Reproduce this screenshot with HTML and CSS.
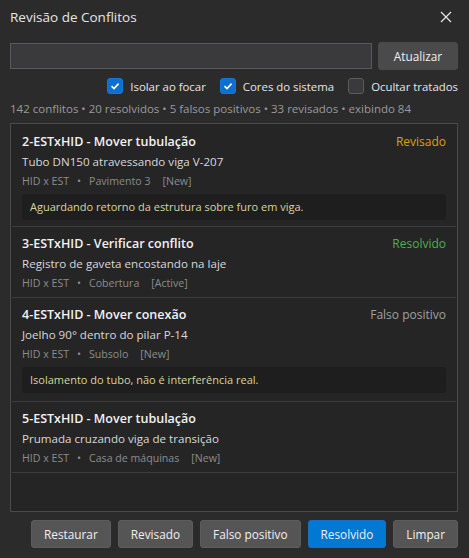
FILE: index.html
```html
<!DOCTYPE html>
<html lang="pt-BR">
<head>
    <meta charset="UTF-8">
    <meta name="viewport" content="width=device-width, initial-scale=1.0">
    <title>Revisão de Conflitos</title>
    <link rel="stylesheet" href="styles.css">
</head>
<body>
    <div class="window">
        <div class="header">
            <span class="title">Revisão de Conflitos</span>
            <span class="close">
                <svg width="12" height="12" viewBox="0 0 12 12"><path d="M1 1L11 11M11 1L1 11" stroke="#e6e6e6" stroke-width="1.2"/></svg>
            </span>
        </div>
        <div class="search-row">
            <input class="search" type="text">
            <button class="btn">Atualizar</button>
        </div>
        <div class="options">
            <label class="opt"><span class="box checked"><svg width="10" height="10" viewBox="0 0 10 10"><path d="M1.5 5.2L4 7.6L8.6 2.6" fill="none" stroke="#fff" stroke-width="1.6"/></svg></span>Isolar ao focar</label>
            <label class="opt"><span class="box checked"><svg width="10" height="10" viewBox="0 0 10 10"><path d="M1.5 5.2L4 7.6L8.6 2.6" fill="none" stroke="#fff" stroke-width="1.6"/></svg></span>Cores do sistema</label>
            <label class="opt"><span class="box"></span>Ocultar tratados</label>
        </div>
        <div class="stats">142 conflitos • 20 resolvidos • 5 falsos positivos • 33 revisados • exibindo 84</div>
        <ul class="list">
            <li class="item">
                <div class="item-head">
                    <span class="item-title">2-ESTxHID - Mover tubulação</span>
                    <span class="status revisado">Revisado</span>
                </div>
                <div class="item-desc">Tubo DN150 atravessando viga V-207</div>
                <div class="item-meta"><span>HID x EST</span><span>•</span><span>Pavimento 3</span><span>[New]</span></div>
                <div class="note">Aguardando retorno da estrutura sobre furo em viga.</div>
            </li>
            <li class="item">
                <div class="item-head">
                    <span class="item-title">3-ESTxHID - Verificar conflito</span>
                    <span class="status resolvido">Resolvido</span>
                </div>
                <div class="item-desc">Registro de gaveta encostando na laje</div>
                <div class="item-meta"><span>HID x EST</span><span>•</span><span>Cobertura</span><span>[Active]</span></div>
            </li>
            <li class="item">
                <div class="item-head">
                    <span class="item-title">4-ESTxHID - Mover conexão</span>
                    <span class="status falso">Falso positivo</span>
                </div>
                <div class="item-desc">Joelho 90° dentro do pilar P-14</div>
                <div class="item-meta"><span>HID x EST</span><span>•</span><span>Subsolo</span><span>[New]</span></div>
                <div class="note">Isolamento do tubo, não é interferência real.</div>
            </li>
            <li class="item">
                <div class="item-head">
                    <span class="item-title">5-ESTxHID - Mover tubulação</span>
                </div>
                <div class="item-desc">Prumada cruzando viga de transição</div>
                <div class="item-meta"><span>HID x EST</span><span>•</span><span>Casa de máquinas</span><span>[New]</span></div>
            </li>
        </ul>
        <div class="actions">
            <button class="btn">Restaurar</button>
            <button class="btn">Revisado</button>
            <button class="btn">Falso positivo</button>
            <button class="btn primary">Resolvido</button>
            <button class="btn">Limpar</button>
        </div>
    </div>
</body>
</html>
```

FILE: styles.css
```css
body {
    margin: 0;
    padding: 0;
    background-color: #2b2b2c;
    font-family: "Open Sans", "Noto Sans", sans-serif;
    color: #e6e6e6;
    height: 100vh;
    overflow: hidden;
}
.window {
    display: flex;
    flex-direction: column;
    height: 558px;
    padding: 0 11px 0 10px;
    box-sizing: border-box;
}
.header {
    display: flex;
    justify-content: space-between;
    align-items: center;
    height: 34px;
}
.title {
    font-size: 13.5px;
    color: #e6e6e6;
}
.close {
    display: flex;
    margin-right: 6px;
}
.search-row {
    display: flex;
    align-items: center;
    gap: 6px;
    margin-top: 8px;
}
.search {
    flex-grow: 1;
    height: 26px;
    box-sizing: border-box;
    background: #3a3a3d;
    border: 1px solid #595959;
    color: #e6e6e6;
    outline: none;
}
.btn {
    font-family: inherit;
    font-size: 11.8px;
    color: #f0f0f0;
    background: #555555;
    border: 1px solid #5a5a5a;
    border-radius: 3px;
    height: 28px;
    padding: 0 12px;
    white-space: nowrap;
    cursor: pointer;
}
.search-row .btn {
    width: 80px;
    background: #4a4a4a;
    border-color: #4a4a4a;
}
.options {
    display: flex;
    justify-content: flex-end;
    align-items: center;
    gap: 14px;
    margin-top: 8px;
    font-size: 11.4px;
}
.opt {
    display: flex;
    align-items: center;
    gap: 7px;
}
.box {
    width: 14px;
    height: 14px;
    border-radius: 3px;
    background: #3a3a3d;
    border: 1px solid #5c5c5c;
    display: flex;
    align-items: center;
    justify-content: center;
}
.box.checked {
    background: #0f6fd0;
    border-color: #1777d8;
}
.stats {
    font-size: 11.5px;
    color: #9a9a9a;
    margin-top: 7px;
    line-height: 16px;
}
.list {
    list-style: none;
    margin: 6px 0 0 0;
    padding: 0 1px;
    height: 389px;
    box-sizing: border-box;
    border: 1px solid #4a4a4a;
    background: #252526;
}
.item {
    padding: 8px 10px 5px;
    border-bottom: 1px solid #3c3c3c;
}
.item:first-child {
    padding-top: 9px;
}
.item:first-child .note {
    margin-bottom: 1px;
}
.item-head {
    display: flex;
    justify-content: space-between;
    align-items: center;
    line-height: 18px;
}
.item-title {
    font-size: 12.5px;
    font-weight: 600;
    color: #f2f2f2;
}
.status {
    font-size: 12px;
}
.revisado {
    color: #dca10c;
}
.resolvido {
    color: #4caf50;
}
.falso {
    color: #a0a0a0;
}
.item-desc {
    font-size: 11.6px;
    color: #d8d8d8;
    line-height: 18px;
    margin-top: 2px;
}
.item-meta {
    display: flex;
    gap: 8px;
    font-size: 10.6px;
    color: #8c8c8c;
    line-height: 18px;
    margin-top: 1px;
}
.item-meta span:nth-child(3) {
    margin-right: 4px;
}
.note {
    margin: 4px 0 3px;
    height: 26px;
    line-height: 26px;
    padding: 0 8px;
    background: #1e1e1e;
    border-radius: 3px;
    font-size: 11px;
    color: #d8d49e;
}
.actions {
    display: flex;
    justify-content: flex-end;
    gap: 7px;
    margin-top: 8px;
}
.actions .btn {
    background: #555555;
    border-color: #5c5c5c;
}
.actions .btn.primary {
    background: #0078d4;
    border-color: #1a6fc0;
}
```
